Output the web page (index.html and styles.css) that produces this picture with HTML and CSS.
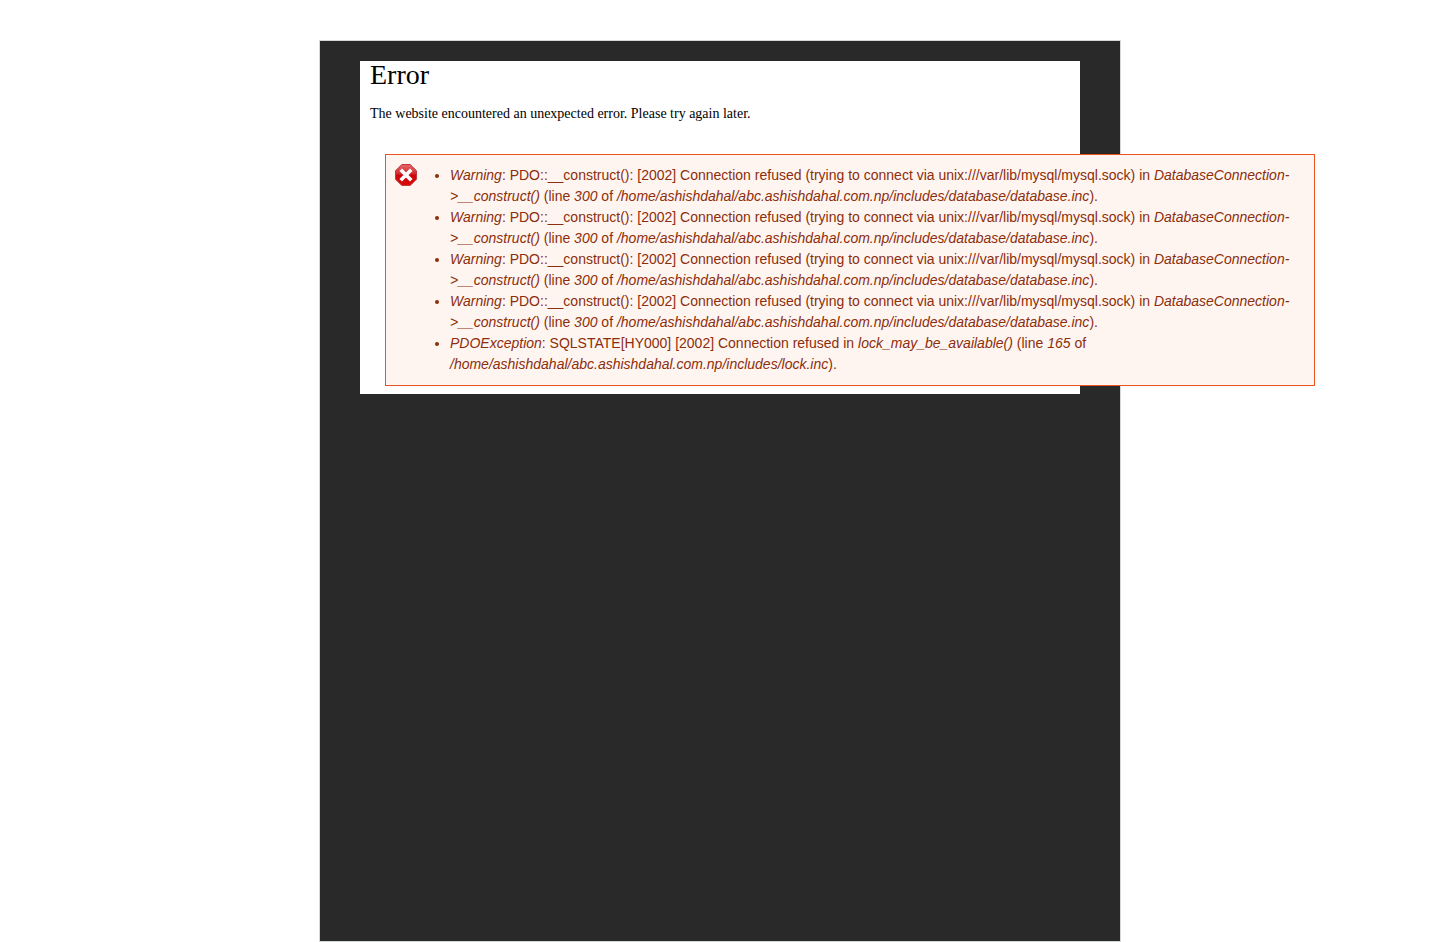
FILE: index.html
```html
<!DOCTYPE html>
<html lang="en">
<head>
<meta charset="utf-8">
<meta name="viewport" content="width=device-width, initial-scale=1">
<title>Error</title>
<link rel="stylesheet" href="styles.css">
</head>
<body>
<div class="page">
  <main class="content">
    <h1 class="title">Error</h1>
    <p class="intro">The website encountered an unexpected error. Please try again later.</p>
    <div class="messages" role="alert">
      <svg class="messages-icon" viewBox="0 0 24 24" aria-hidden="true">
        <defs>
          <linearGradient id="red" x1="0" y1="0" x2="0" y2="1">
            <stop offset="0" stop-color="#e2686a"/>
            <stop offset=".45" stop-color="#d42a2c"/>
            <stop offset=".5" stop-color="#cc0508"/>
            <stop offset="1" stop-color="#d80a0c"/>
          </linearGradient>
        </defs>
        <path d="M7.800 1.500h8.400l6.300 6.300v8.400l-6.300 6.300H7.800l-6.300-6.300V7.800z" fill="url(#red)" stroke="#c4383a" stroke-width="1" stroke-linejoin="round"/>
        <path d="M8 8l8 8M16 8l-8 8" fill="none" stroke="#fff" stroke-width="3.600" stroke-linecap="square"/>
      </svg>
      <ul class="messages-list">
        <li><em>Warning</em>: PDO::__construct(): [2002] Connection refused (trying to connect via unix:///var/lib/mysql/mysql.sock) in <em>DatabaseConnection-&gt;__construct()</em> (line <em>300</em> of <em>/home/ashishdahal/abc.ashishdahal.com.np/includes/database/database.inc</em>).</li>
        <li><em>Warning</em>: PDO::__construct(): [2002] Connection refused (trying to connect via unix:///var/lib/mysql/mysql.sock) in <em>DatabaseConnection-&gt;__construct()</em> (line <em>300</em> of <em>/home/ashishdahal/abc.ashishdahal.com.np/includes/database/database.inc</em>).</li>
        <li><em>Warning</em>: PDO::__construct(): [2002] Connection refused (trying to connect via unix:///var/lib/mysql/mysql.sock) in <em>DatabaseConnection-&gt;__construct()</em> (line <em>300</em> of <em>/home/ashishdahal/abc.ashishdahal.com.np/includes/database/database.inc</em>).</li>
        <li><em>Warning</em>: PDO::__construct(): [2002] Connection refused (trying to connect via unix:///var/lib/mysql/mysql.sock) in <em>DatabaseConnection-&gt;__construct()</em> (line <em>300</em> of <em>/home/ashishdahal/abc.ashishdahal.com.np/includes/database/database.inc</em>).</li>
        <li><em>PDOException</em>: SQLSTATE[HY000] [2002] Connection refused in <em>lock_may_be_available()</em> (line <em>165</em> of <em>/home/ashishdahal/abc.ashishdahal.com.np/includes/lock.inc</em>).</li>
      </ul>
    </div>
  </main>
</div>
</body>
</html>
```
FILE: styles.css
```css
* {
  box-sizing: border-box;
}

body {
  margin: 0;
  padding-top: 40px;
  background: #fff;
  color: #000;
  font-family: "Liberation Serif", "Times New Roman", serif;
  font-size: 14px;
  line-height: 21px;
}

.page {
  max-width: 802px;
  min-height: calc(100vh - 40px);
  margin: 0 auto;
  padding: 20px 40px;
  border: 1px solid #d3d7d7;
  background: #292929;
}

.content {
  display: flow-root;
  padding: 0 10px 8px;
  background: #fff;
}

.title {
  margin: 0;
  font-size: 28px;
  font-weight: normal;
  line-height: 28px;
}

.intro {
  margin: 14px 0 30px;
}

.messages {
  display: flex;
  gap: 8px;
  margin: 0 -245px 0 15px;
  padding: 10px 10px 10px 8px;
  border: 1px solid #ed541d;
  background: #fef5f1;
  color: #8c2e0b;
  font-family: "Liberation Sans", Arial, sans-serif;
}

.messages-icon {
  flex: none;
  width: 24px;
  height: 24px;
  margin-top: -2px;
}

.messages-list {
  flex: 1;
  margin: 0;
  padding: 0 0 0 24px;
}
```
